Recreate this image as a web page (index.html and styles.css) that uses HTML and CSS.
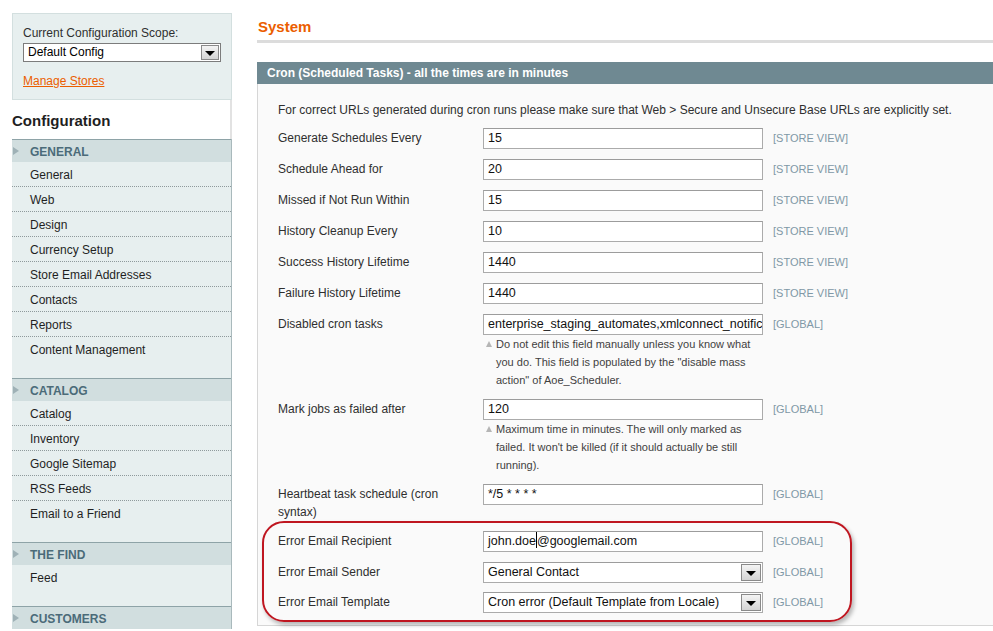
FILE: index.html
```html
<!DOCTYPE html>
<html>
<head>
<meta charset="utf-8">
<link rel="stylesheet" href="styles.css">
</head>
<body>
<div class="page">
  <aside class="side">
    <div class="scope">
      <div class="scope-label">Current Configuration Scope:</div>
      <div class="side-select">Default Config<span class="sbtn"><span class="tri"></span></span></div>
      <a class="manage" href="#">Manage Stores</a>
    </div>
    <h3 class="side-title">Configuration</h3>
    <div class="tabs">
      <div class="grp">
        <div class="grp-h">GENERAL</div>
        <ul>
          <li>General</li><li>Web</li><li>Design</li><li>Currency Setup</li><li>Store Email Addresses</li><li>Contacts</li><li>Reports</li><li>Content Management</li>
        </ul>
      </div>
      <div class="grp">
        <div class="grp-h">CATALOG</div>
        <ul>
          <li>Catalog</li><li>Inventory</li><li>Google Sitemap</li><li>RSS Feeds</li><li>Email to a Friend</li>
        </ul>
      </div>
      <div class="grp">
        <div class="grp-h">THE FIND</div>
        <ul><li>Feed</li></ul>
      </div>
      <div class="grp">
        <div class="grp-h">CUSTOMERS</div>
      </div>
    </div>
  </aside>
  <main class="main">
    <h2 class="page-title">System</h2>
    <section class="panel">
      <div class="panel-h">Cron (Scheduled Tasks) - all the times are in minutes</div>
      <div class="panel-b">
        <p class="intro">For correct URLs generated during cron runs please make sure that Web &gt; Secure and Unsecure Base URLs are explicitly set.</p>
        <div class="row"><div class="lbl">Generate Schedules Every</div><div class="val"><div class="inp">15</div></div><div class="scp">[STORE VIEW]</div></div>
        <div class="row"><div class="lbl">Schedule Ahead for</div><div class="val"><div class="inp">20</div></div><div class="scp">[STORE VIEW]</div></div>
        <div class="row"><div class="lbl">Missed if Not Run Within</div><div class="val"><div class="inp">15</div></div><div class="scp">[STORE VIEW]</div></div>
        <div class="row"><div class="lbl">History Cleanup Every</div><div class="val"><div class="inp">10</div></div><div class="scp">[STORE VIEW]</div></div>
        <div class="row"><div class="lbl">Success History Lifetime</div><div class="val"><div class="inp">1440</div></div><div class="scp">[STORE VIEW]</div></div>
        <div class="row"><div class="lbl">Failure History Lifetime</div><div class="val"><div class="inp">1440</div></div><div class="scp">[STORE VIEW]</div></div>
        <div class="row"><div class="lbl">Disabled cron tasks</div><div class="val"><div class="inp">enterprise_staging_automates,xmlconnect_notific</div><p class="note">Do not edit this field manually unless you know what you do. This field is populated by the "disable mass action" of Aoe_Scheduler.</p></div><div class="scp">[GLOBAL]</div></div>
        <div class="row"><div class="lbl">Mark jobs as failed after</div><div class="val"><div class="inp">120</div><p class="note">Maximum time in minutes. The will only marked as failed. It won't be killed (if it should actually be still running).</p></div><div class="scp">[GLOBAL]</div></div>
        <div class="row"><div class="lbl">Heartbeat task schedule (cron syntax)</div><div class="val"><div class="inp">*/5 * * * *</div></div><div class="scp">[GLOBAL]</div></div>
        <div class="hl-group">
          <div class="row"><div class="lbl">Error Email Recipient</div><div class="val"><div class="inp">john.doe<span class="caret"></span>@googlemail.com</div></div><div class="scp">[GLOBAL]</div></div>
          <div class="row tight"><div class="lbl">Error Email Sender</div><div class="val"><div class="inp sel">General Contact<span class="sbtn"><span class="tri"></span></span></div></div><div class="scp">[GLOBAL]</div></div>
          <div class="row tight"><div class="lbl">Error Email Template</div><div class="val"><div class="inp sel">Cron error (Default Template from Locale)<span class="sbtn"><span class="tri"></span></span></div></div><div class="scp">[GLOBAL]</div></div>
        </div>
      </div>
    </section>
  </main>
</div>
</body>
</html>
```

FILE: styles.css
```css
* { box-sizing: border-box; }
html, body { margin: 0; padding: 0; background: #fff; }
body {
  font-family: "Liberation Sans", Arial, sans-serif;
  font-size: 12px;
  color: #2f2f2f;
  overflow: hidden;
}
.page {
  display: flex;
  align-items: flex-start;
  padding: 13px 0 0 12px;
  gap: 25px;
  width: 993px;
  height: 631px;
  overflow: hidden;
}
.side { width: 220px; flex: none; }
.scope {
  background: #e7efef;
  border: 1px solid #d3dfdf;
  padding: 11px 10px 11px 10px;
  height: 87px;
}
.scope-label { line-height: 16px; color: #2f2f2f; }
.side-select {
  position: relative;
  margin-top: 2px;
  height: 19px;
  line-height: 17px;
  background: #fff;
  border: 1px solid #7c7c7c;
  padding-left: 4px;
  color: #000;
}
.side-select .sbtn { top: 1px; right: 1px; bottom: 1px; width: 18px; }
.manage {
  display: block;
  margin-top: 11px;
  line-height: 16px;
  color: #eb5e00;
  text-decoration: underline;
}
.side-title {
  margin: 0;
  height: 39px;
  line-height: 41px;
  font-size: 15px;
  font-weight: bold;
  color: #1f1f1f;
  border-right: 2px solid #e2e2e2;
}
.tabs {
  background: #e7efef;
  border-right: 1px solid #a9b9bc;
}
.grp-h {
  position: relative;
  height: 23px;
  border-top: 1px solid #8ea3a7;
  background: #d1dedf;
  padding: 1px 0 0 18px;
  line-height: 22px;
  font-weight: bold;
  color: #4b6b79;
}
.grp-h::before {
  content: "";
  position: absolute;
  left: 1px;
  top: 7px;
  border-left: 6px solid #9fb1b6;
  border-top: 4px solid transparent;
  border-bottom: 4px solid transparent;
}
.grp ul {
  list-style: none;
  margin: 0;
  padding: 0 0 16px 0;
}
.grp li {
  height: 25px;
  line-height: 24px;
  padding: 1px 0 0 18px;
  border-bottom: 1px dotted #8f9a9c;
  color: #1f1f1f;
  overflow: visible;
}
.grp li:last-child { border-bottom-color: transparent; }
.main { flex: 1; min-width: 0; }
.page-title {
  margin: 0 0 19px 0;
  padding-left: 1px;
  height: 30px;
  line-height: 28px;
  font-size: 15px;
  font-weight: bold;
  color: #eb5e00;
  border-bottom: 3px solid #dcdcdc;
}
.panel-h {
  height: 22px;
  line-height: 22px;
  background: #6f8992;
  color: #fff;
  font-weight: bold;
  padding-left: 10px;
}
.panel-b {
  background: #fafafa;
  border-left: 1px solid #d6d6d6;
  border-bottom: 1px solid #d6d6d6;
  padding: 17px 20px 8px 20px;
}
.intro {
  margin: 0 0 4px 0;
  line-height: 18px;
  color: #2f2f2f;
  white-space: nowrap;
}
.row {
  display: grid;
  grid-template-columns: 195px 280px auto;
  column-gap: 10px;
  padding: 5px 0;
}
.row.tight { padding: 5px 0 4px 0; }
.lbl { line-height: 18px; padding-top: 1px; color: #2f2f2f; }
.inp {
  position: relative;
  height: 21px;
  line-height: 19px;
  background: #fff;
  border: 1px solid #ababab;
  border-top-color: #9c9c9c;
  padding: 0 4px;
  font-size: 12.5px;
  color: #111;
  white-space: nowrap;
  overflow: hidden;
}
.inp.sel { padding-right: 24px; }
.sbtn {
  position: absolute;
  top: 1px;
  right: 1px;
  bottom: 1px;
  width: 20px;
  background: linear-gradient(#f4f4f4, #d4d4d4);
  border: 1px solid #8a8a8a;
}
.tri {
  position: absolute;
  left: 50%;
  top: 50%;
  margin: -2px 0 0 -5px;
  border-top: 5px solid #000;
  border-left: 5px solid transparent;
  border-right: 5px solid transparent;
}
.caret {
  display: inline-block;
  width: 1px;
  height: 16px;
  background: #000;
  vertical-align: -3px;
}
.note {
  position: relative;
  margin: 0;
  padding-left: 13px;
  font-size: 11px;
  line-height: 18px;
  color: #3f3f3f;
}
.note::before {
  content: "";
  position: absolute;
  left: 3px;
  top: 6px;
  border-bottom: 6px solid #b5b5b5;
  border-left: 3px solid transparent;
  border-right: 3px solid transparent;
}
.scp {
  font-size: 11px;
  line-height: 18px;
  padding-top: 1px;
  color: #8098a6;
  white-space: nowrap;
}
.hl-group { position: relative; }
.hl-group::after {
  content: "";
  position: absolute;
  left: -16px;
  top: -5px;
  width: 586px;
  height: 97px;
  border: 2px solid #bf1620;
  border-radius: 22px;
  box-shadow: 2px 3px 4px rgba(0,0,0,0.28);
  pointer-events: none;
}
```
